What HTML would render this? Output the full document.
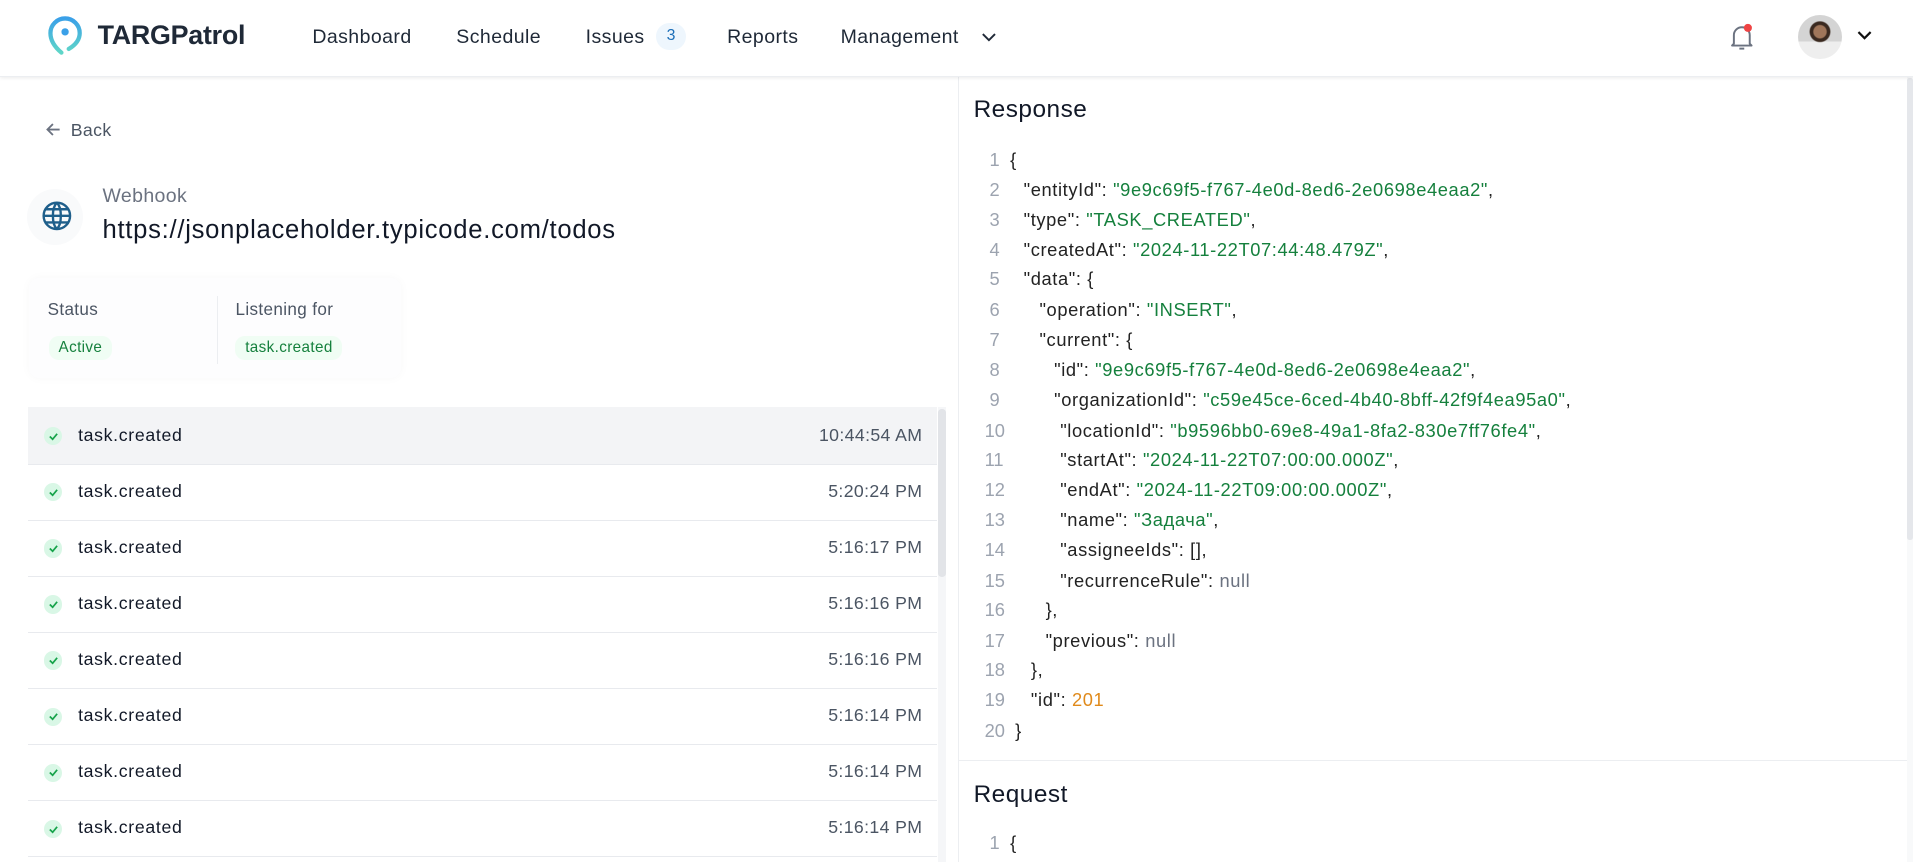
<!DOCTYPE html>
<html><head><meta charset="utf-8">
<style>
html,body{margin:0;padding:0;background:#fff;overflow:hidden;width:1913px;height:862px}
#w{position:relative;width:1568px;height:707px;zoom:1.22003;font-family:"Liberation Sans","Noto Sans CJK SC",sans-serif;color:#111827;overflow:hidden}
.a{position:absolute;white-space:nowrap}
.hdr{position:absolute;left:0;top:0;width:1568px;height:62px;background:#fff;box-shadow:0 1px 3px rgba(0,0,0,.08);border-bottom:1px solid #eceef1;z-index:2}
.nav{position:absolute;top:21px;font-size:16px;color:#1f2937;letter-spacing:.35px}
.row{position:absolute;left:23px;width:745px;height:46px;border-bottom:1px solid #e8eaee}
.row .ck{position:absolute;left:13px;top:16px;width:15px;height:15px;border-radius:50%;background:#d9f7e6}
.row .ck svg{position:absolute;left:3px;top:3px}
.row .t{position:absolute;left:41px;top:14px;font-size:14.5px;color:#111827;letter-spacing:.55px}
.row .tm{position:absolute;right:12px;top:14px;font-size:14.5px;color:#4b5563;letter-spacing:.3px}
.ln{position:absolute;font-size:15px;color:#222;white-space:nowrap;letter-spacing:.5px}
.n{position:absolute;font-size:15px;color:#9ca3af}
.s{color:#15803d}.nl{color:#6b7280}.num{color:#e08a1b}
</style></head><body><div id="w">
<div class="hdr">
  <svg class="a" style="left:39px;top:13px" width="28" height="34" viewBox="0 0 28 34"><defs><linearGradient id="g" x1="0" y1="0" x2="0" y2="1"><stop offset="0" stop-color="#3aa0e8"/><stop offset="1" stop-color="#5fd6c8"/></linearGradient></defs><path d="M11 30 C5 25 2 20 2 14 A12 12 0 1 1 26 14 C26 20 22 24 17 27" fill="none" stroke="url(#g)" stroke-width="3.5" stroke-linecap="round"/><circle cx="14" cy="13" r="3" fill="#3aa0e8"/></svg>
  <div class="a" style="left:80px;top:16px;font-size:22px;font-weight:bold;color:#1f2937;letter-spacing:-.2px">TARGPatrol</div>
  <div class="nav" style="left:256px">Dashboard</div>
  <div class="nav" style="left:374px">Schedule</div>
  <div class="nav" style="left:480px">Issues</div>
  <div class="a" style="left:538px;top:19px;width:24px;height:22px;border-radius:11px;background:#eef6fd;color:#1d6fb8;font-size:13px;text-align:center;line-height:22px">3</div>
  <div class="nav" style="left:596px">Reports</div>
  <div class="nav" style="left:689px">Management</div>
  <svg class="a" style="left:804px;top:25px" width="13" height="10" viewBox="0 0 13 10"><path d="M1.5 2.5 L6.5 7.5 L11.5 2.5" fill="none" stroke="#1f2937" stroke-width="1.6"/></svg>
  <svg class="a" style="left:1417px;top:19px" width="22" height="24" viewBox="0 0 22 24"><path d="M4 17 V10 A6.5 6.5 0 0 1 17 10 V17 L18.5 18.5 H2.5 Z" fill="none" stroke="#6b7280" stroke-width="1.6" stroke-linejoin="round"/><path d="M8.5 21 H12.5" stroke="#6b7280" stroke-width="1.6"/><circle cx="15.5" cy="4" r="3.3" fill="#ef4444"/></svg>
  <div class="a" style="left:1474px;top:12px;width:36px;height:36px;border-radius:50%;background:radial-gradient(circle at 50% 38%,#a0765a 0 5px,#3b2a20 6px 8px,transparent 9px),linear-gradient(#d4d4d4 0 60%,#eee 60%);overflow:hidden"></div>
  <svg class="a" style="left:1521px;top:24px" width="14" height="10" viewBox="0 0 14 10"><path d="M2 2.5 L7 7.5 L12 2.5" fill="none" stroke="#111" stroke-width="1.8"/></svg>
</div>

<svg class="a" style="left:37px;top:99px" width="14" height="14" viewBox="0 0 14 14"><path d="M12 7 H2 M6.5 2.5 L2 7 L6.5 11.5" fill="none" stroke="#6b7280" stroke-width="1.5"/></svg>
<div class="a" style="left:58px;top:98px;font-size:14.5px;color:#4b5563;letter-spacing:.3px">Back</div>
<div class="a" style="left:22px;top:155px;width:46px;height:46px;border-radius:50%;background:#f9fafb"></div>
<svg class="a" style="left:34px;top:164px" width="26" height="26" viewBox="0 0 24 24" fill="none" stroke="#1f5f8b" stroke-width="1.8"><circle cx="12" cy="12" r="10"/><path d="M2 12 H22 M12 2 C8 6 8 18 12 22 M12 2 C16 6 16 18 12 22 M3.5 7 H20.5 M3.5 17 H20.5"/></svg>
<div class="a" style="left:84px;top:152px;font-size:16px;color:#6b7280;letter-spacing:.3px">Webhook</div>
<div class="a" style="left:84px;top:177px;font-size:21px;color:#111827;letter-spacing:.6px">https://jsonplaceholder.typicode.com/todos</div>

<div class="a" style="left:24px;top:228px;width:305px;height:82px;background:#fdfdfe;border-radius:8px;box-shadow:0 0 8px rgba(0,0,0,.03)"></div>
<div class="a" style="left:178px;top:243px;width:1px;height:55px;background:#eceef1"></div>
<div class="a" style="left:39px;top:246px;font-size:14px;color:#4b5563;letter-spacing:.3px">Status</div>
<div class="a" style="left:193px;top:246px;font-size:14px;color:#4b5563;letter-spacing:.3px">Listening for</div>
<div class="a" style="left:40px;top:275px;padding:3px 8px;border-radius:8px;background:#f0fdf4;color:#15803d;font-size:12.5px;letter-spacing:.3px">Active</div>
<div class="a" style="left:193px;top:275px;padding:3px 8px;border-radius:8px;background:#f0fdf4;color:#15803d;font-size:12.5px;letter-spacing:.3px">task.created</div>

<div class="row" style="top:334px;background:#f3f4f6"><div class="ck"><svg width="9" height="9" viewBox="0 0 9 9"><path d="M1.5 4.5 L3.8 6.8 L7.5 2.3" fill="none" stroke="#16a34a" stroke-width="1.4"/></svg></div><div class="t">task.created</div><div class="tm">10:44:54 AM</div></div>
<div class="row" style="top:380px"><div class="ck"><svg width="9" height="9" viewBox="0 0 9 9"><path d="M1.5 4.5 L3.8 6.8 L7.5 2.3" fill="none" stroke="#16a34a" stroke-width="1.4"/></svg></div><div class="t">task.created</div><div class="tm">5:20:24 PM</div></div>
<div class="row" style="top:426px"><div class="ck"><svg width="9" height="9" viewBox="0 0 9 9"><path d="M1.5 4.5 L3.8 6.8 L7.5 2.3" fill="none" stroke="#16a34a" stroke-width="1.4"/></svg></div><div class="t">task.created</div><div class="tm">5:16:17 PM</div></div>
<div class="row" style="top:472px"><div class="ck"><svg width="9" height="9" viewBox="0 0 9 9"><path d="M1.5 4.5 L3.8 6.8 L7.5 2.3" fill="none" stroke="#16a34a" stroke-width="1.4"/></svg></div><div class="t">task.created</div><div class="tm">5:16:16 PM</div></div>
<div class="row" style="top:518px"><div class="ck"><svg width="9" height="9" viewBox="0 0 9 9"><path d="M1.5 4.5 L3.8 6.8 L7.5 2.3" fill="none" stroke="#16a34a" stroke-width="1.4"/></svg></div><div class="t">task.created</div><div class="tm">5:16:16 PM</div></div>
<div class="row" style="top:564px"><div class="ck"><svg width="9" height="9" viewBox="0 0 9 9"><path d="M1.5 4.5 L3.8 6.8 L7.5 2.3" fill="none" stroke="#16a34a" stroke-width="1.4"/></svg></div><div class="t">task.created</div><div class="tm">5:16:14 PM</div></div>
<div class="row" style="top:610px"><div class="ck"><svg width="9" height="9" viewBox="0 0 9 9"><path d="M1.5 4.5 L3.8 6.8 L7.5 2.3" fill="none" stroke="#16a34a" stroke-width="1.4"/></svg></div><div class="t">task.created</div><div class="tm">5:16:14 PM</div></div>
<div class="row" style="top:656px"><div class="ck"><svg width="9" height="9" viewBox="0 0 9 9"><path d="M1.5 4.5 L3.8 6.8 L7.5 2.3" fill="none" stroke="#16a34a" stroke-width="1.4"/></svg></div><div class="t">task.created</div><div class="tm">5:16:14 PM</div></div>
<div class="a" style="left:769px;top:334px;width:6px;height:373px;background:#f5f6f8"></div>
<div class="a" style="left:769px;top:335px;width:6px;height:138px;border-radius:3px;background:#e2e4e8"></div>

<div class="a" style="left:785px;top:62px;width:1px;height:645px;background:#eceef1"></div>

<div class="a" style="left:1563px;top:62px;width:5px;height:645px;background:#f8f9fa"></div>
<div class="a" style="left:1563px;top:64px;width:5px;height:379px;background:#e5e7eb;border-radius:2px"></div>
<div class="a" style="left:798px;top:79px;font-size:20px;color:#111827;letter-spacing:.4px">Response</div>

<div class="n" style="left:811px;top:122px">1</div><div class="ln" style="left:828px;top:122px">{</div>
<div class="n" style="left:811px;top:147px">2</div><div class="ln" style="left:839px;top:147px">"entityId": <span class="s">"9e9c69f5-f767-4e0d-8ed6-2e0698e4eaa2"</span>,</div>
<div class="n" style="left:811px;top:171px">3</div><div class="ln" style="left:839px;top:171px">"type": <span class="s">"TASK_CREATED"</span>,</div>
<div class="n" style="left:811px;top:196px">4</div><div class="ln" style="left:839px;top:196px">"createdAt": <span class="s">"2024-11-22T07:44:48.479Z"</span>,</div>
<div class="n" style="left:811px;top:220px">5</div><div class="ln" style="left:839px;top:220px">"data": {</div>
<div class="n" style="left:811px;top:245px">6</div><div class="ln" style="left:852px;top:245px">"operation": <span class="s">"INSERT"</span>,</div>
<div class="n" style="left:811px;top:270px">7</div><div class="ln" style="left:852px;top:270px">"current": {</div>
<div class="n" style="left:811px;top:294px">8</div><div class="ln" style="left:864px;top:294px">"id": <span class="s">"9e9c69f5-f767-4e0d-8ed6-2e0698e4eaa2"</span>,</div>
<div class="n" style="left:811px;top:319px">9</div><div class="ln" style="left:864px;top:319px">"organizationId": <span class="s">"c59e45ce-6ced-4b40-8bff-42f9f4ea95a0"</span>,</div>
<div class="n" style="left:807px;top:344px">10</div><div class="ln" style="left:869px;top:344px">"locationId": <span class="s">"b9596bb0-69e8-49a1-8fa2-830e7ff76fe4"</span>,</div>
<div class="n" style="left:807px;top:368px">11</div><div class="ln" style="left:869px;top:368px">"startAt": <span class="s">"2024-11-22T07:00:00.000Z"</span>,</div>
<div class="n" style="left:807px;top:393px">12</div><div class="ln" style="left:869px;top:393px">"endAt": <span class="s">"2024-11-22T09:00:00.000Z"</span>,</div>
<div class="n" style="left:807px;top:417px">13</div><div class="ln" style="left:869px;top:417px">"name": <span class="s">"Задача"</span>,</div>
<div class="n" style="left:807px;top:442px">14</div><div class="ln" style="left:869px;top:442px">"assigneeIds": [],</div>
<div class="n" style="left:807px;top:467px">15</div><div class="ln" style="left:869px;top:467px">"recurrenceRule": <span class="nl">null</span></div>
<div class="n" style="left:807px;top:491px">16</div><div class="ln" style="left:857px;top:491px">},</div>
<div class="n" style="left:807px;top:516px">17</div><div class="ln" style="left:857px;top:516px">"previous": <span class="nl">null</span></div>
<div class="n" style="left:807px;top:540px">18</div><div class="ln" style="left:845px;top:540px">},</div>
<div class="n" style="left:807px;top:565px">19</div><div class="ln" style="left:845px;top:565px">"id": <span class="num">201</span></div>
<div class="n" style="left:807px;top:590px">20</div><div class="ln" style="left:832px;top:590px">}</div>

<div class="a" style="left:786px;top:623px;width:777px;height:1px;background:#eceef1"></div>
<div class="a" style="left:798px;top:640px;font-size:20px;color:#111827;letter-spacing:.4px">Request</div>
<div class="n" style="left:811px;top:682px">1</div><div class="ln" style="left:828px;top:682px">{</div>
</div></body></html>
